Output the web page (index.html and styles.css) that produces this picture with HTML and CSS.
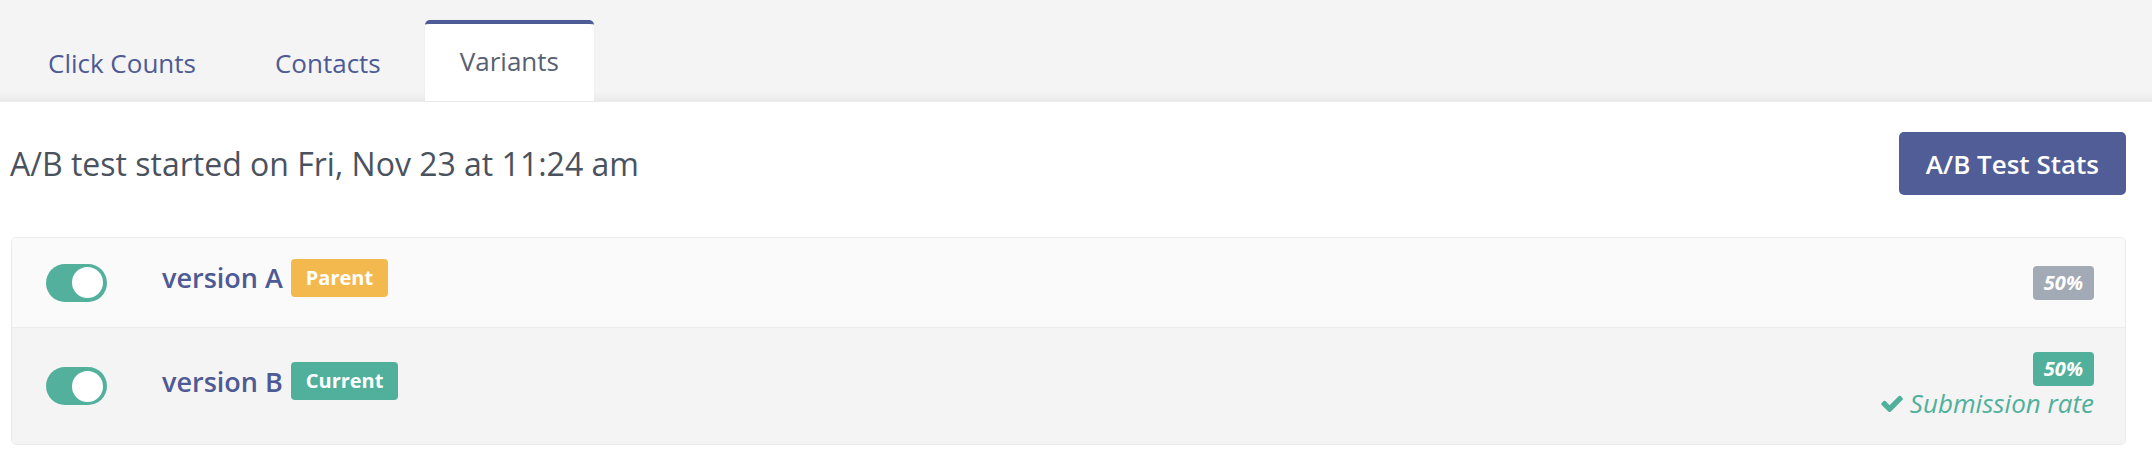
FILE: index.html
```html
<!DOCTYPE html>
<html lang="en">
<head>
  <meta charset="UTF-8">
  <title>Variants</title>
  <link rel="stylesheet" href="styles.css">
</head>
<body>
  <nav class="tabs">
    <a class="tab" href="#">Click Counts</a>
    <a class="tab" href="#">Contacts</a>
    <a class="tab active" href="#">Variants</a>
  </nav>

  <main class="content">
    <div class="header">
      <h2>A/B test started on Fri, Nov 23 at 11:24 am</h2>
      <button type="button">A/B Test Stats</button>
    </div>

    <div class="variants">
      <div class="variant variant-parent">
        <span class="toggle"><span class="knob"></span></span>
        <div class="title">
          <span class="name">version A</span>
          <span class="label label-parent">Parent</span>
        </div>
        <div class="stats">
          <span class="pct pct-gray">50%</span>
        </div>
      </div>

      <div class="variant variant-current">
        <span class="toggle"><span class="knob"></span></span>
        <div class="title">
          <span class="name">version B</span>
          <span class="label label-current">Current</span>
        </div>
        <div class="stats">
          <span class="pct pct-green">50%</span>
          <span class="goal">
            <svg class="check" viewBox="100 320 1575 1150" aria-hidden="true"><path d="M1671 566q0 40-28 68l-724 724-136 136q-28 28-68 28t-68-28l-136-136-362-362q-28-28-28-68t28-68l136-136q28-28 68-28t68 28l294 295 656-657q28-28 68-28t68 28l136 136q28 28 28 68z"/></svg>
            Submission rate
          </span>
        </div>
      </div>
    </div>
  </main>
</body>
</html>
```

FILE: styles.css
```css
body {
  margin: 0;
  font-family: "Open Sans", "Liberation Sans", sans-serif;
  background-color: #fff;
  color: #4a525e;
}

.tabs {
  display: flex;
  align-items: flex-end;
  gap: 9px;
  height: 101px;
  padding-left: 13px;
  background-color: #f4f4f4;
  box-shadow: inset 0 -14px 10px -12px rgba(0,0,0,0.07);
  border-bottom: 1px solid #ececf0;
}

.tab {
  display: flex;
  align-items: center;
  height: 77px;
  padding: 0 35px 3px;
  box-sizing: border-box;
  border-top: 4px solid transparent;
  border-radius: 5px 5px 0 0;
  font-size: 26px;
  color: #4e5a94;
  text-decoration: none;
}

.tab.active {
  height: 81px;
  background-color: #fff;
  border-top-color: #4f5b96;
  color: #58616f;
  box-shadow: 0 0 2px rgba(0,0,0,0.06);
}

.content {
  padding: 30px 26px 0 10px;
}

.header {
  display: flex;
  justify-content: space-between;
  align-items: center;
}

.header h2 {
  margin: 0;
  font-size: 32px;
  font-weight: 400;
  color: #4a525e;
}

button {
  height: 63px;
  padding: 0 27px;
  background-color: #515d97;
  color: #fff;
  border: none;
  border-radius: 5px;
  font-family: inherit;
  font-size: 26px;
  font-weight: 600;
  cursor: pointer;
}

button:hover {
  background-color: #46518a;
}

.variants {
  margin-top: 42px;
  margin-left: 1px;
  border: 1px solid #ebebeb;
  border-radius: 5px;
  overflow: hidden;
}

.variant {
  display: flex;
  align-items: center;
  padding: 0 31px 0 34px;
}

.variant-parent {
  height: 89px;
  background-color: #fafafa;
  border-bottom: 1px solid #ececec;
}

.variant-current {
  padding-top: 24px;
  padding-bottom: 24px;
  background-color: #f4f4f4;
}

.toggle {
  display: flex;
  justify-content: flex-end;
  align-items: center;
  width: 61px;
  height: 38px;
  padding: 0 4px;
  box-sizing: border-box;
  border-radius: 19px;
  background-color: #52b09c;
}

.knob {
  width: 31px;
  height: 31px;
  border-radius: 50%;
  background-color: #fff;
}

.title {
  display: flex;
  align-items: center;
  margin-left: 55px;
  margin-bottom: 10px;
}

.name {
  font-size: 27px;
  font-weight: 600;
  color: #4e5a94;
}

.label {
  margin-left: 8px;
  height: 38px;
  line-height: 38px;
  padding: 0 15px;
  border-radius: 4px;
  font-size: 20px;
  font-weight: 700;
  color: #fff;
}

.label-parent {
  background-color: #f4b94e;
}

.label-current {
  background-color: #50b09b;
}

.stats {
  margin-left: auto;
  display: flex;
  flex-direction: column;
  align-items: flex-end;
}

.pct {
  height: 34px;
  line-height: 34px;
  padding: 0 11px;
  border-radius: 4px;
  font-size: 20px;
  font-weight: 700;
  font-style: italic;
  color: #fff;
}

.pct-gray {
  background-color: #a2aab5;
}

.pct-green {
  background-color: #50b09b;
}

.goal {
  display: flex;
  align-items: center;
  gap: 7px;
  line-height: 34px;
  font-size: 26px;
  font-style: italic;
  color: #50b09b;
}

.check {
  width: 22px;
  height: 17px;
  fill: #50b09b;
}
```
